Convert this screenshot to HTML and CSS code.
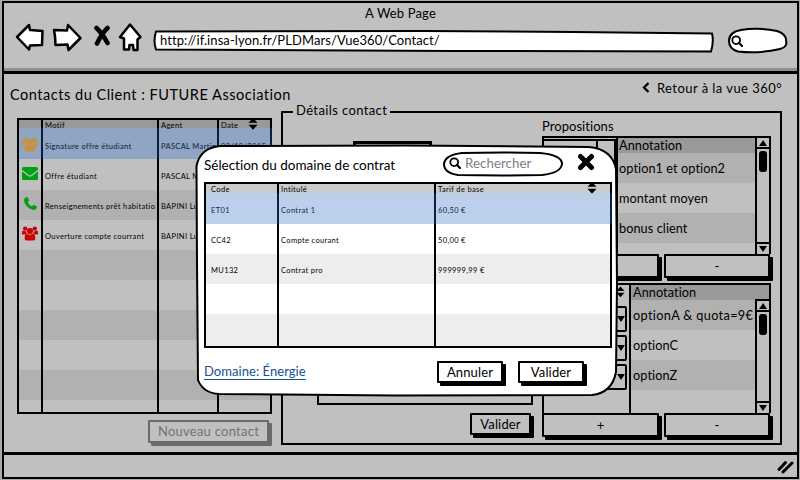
FILE: index.html
```html
<!DOCTYPE html>
<html lang="fr">
<head>
<meta charset="utf-8">
<title>A Web Page</title>
<link rel="stylesheet" href="styles.css">
</head>
<body>
<svg width="0" height="0" class="defs">
  <symbol id="users" viewBox="0 0 16 15">
    <circle cx="3.2" cy="2.6" r="2.2"/><circle cx="12.8" cy="2.6" r="2.2"/>
    <path d="M0 8.5V6q0-1.600 1.500-1.600L4 5.500 5 8.500zM16 8.500V6q0-1.600-1.500-1.600L12 5.500l-1 3z"/>
    <circle cx="8" cy="5" r="3.100"/>
    <path d="M2.600 12.500q0-4.600 2.700-4.800Q8 9.800 10.700 7.700q2.700.2 2.700 4.800 0 1.900-2 1.900H4.600q-2 0-2-1.900z"/>
  </symbol>
  <symbol id="sort" viewBox="0 0 10 12"><path d="M.5 4.800 5 0l4.500 4.800zM.5 6.800h9L5 11.800z"/></symbol>
  <symbol id="lens" viewBox="0 0 12 12"><circle cx="5.200" cy="5.200" r="3.900" fill="none" stroke="#000" stroke-width="1.800"/><path d="M7.800 7.800 11 11" stroke="#000" stroke-width="2.200" stroke-linecap="round"/></symbol>
  <symbol id="up" viewBox="0 0 8 6"><path d="M0 6 4.200 0 8 6z"/></symbol>
  <symbol id="down" viewBox="0 0 8 6"><path d="M0 0h8L4 6z"/></symbol>
</svg>
<div class="window">
  <header class="chrome">
    <div class="page-title">A Web Page</div>
    <div class="toolbar">
      <svg class="back" width="30" height="30" viewBox="0 0 30 30"><path d="m2 15 12-12 1 5 12.500 1-.5 14-12 .5-1 4z"/></svg>
      <svg class="forward" width="31" height="30" viewBox="0 0 31 30"><path d="m2 8 13 .5L16 3l12.500 13-12 12-1-5.500-12 .5q0-8-1.500-15z"/></svg>
      <svg class="stop" width="18" height="22" viewBox="0 0 18 22"><path d="M3.500 3Q9 8 14.500 18M14.500 3Q9 8 4 18.500"/></svg>
      <svg class="home" width="25" height="30" viewBox="0 0 25 30"><path d="m2 15 10-12.500L22.500 15l-3 2.500V28h-4l-.5-5h-3.500l-.5 4.500H6V16.500z"/></svg>
      <div class="address">
        <svg class="outline" width="562" height="26" viewBox="0 0 562 26"><path d="M3 3.500 270 3l150 1 139 1.500q2 8-1 18L300 23 3 21.500Q0 13 3 3.500z"/></svg>
        <span>http://if.insa-lyon.fr/PLDMars/Vue360/Contact/</span>
      </div>
      <div class="quick">
        <svg class="outline" width="62" height="28" viewBox="0 0 62 28"><path d="M2 14Q2 5 14 3 31 0 50 4q9 3 9 9 2 7-6 9-22 5-42 2.500Q2 22 2 14z"/></svg>
        <svg class="quick-lens" width="12" height="12"><use href="#lens"/></svg>
      </div>
    </div>
  </header>

  <main>
    <div class="page-head">
      <h1>Contacts du Client : FUTURE Association</h1>
      <a class="return"><svg width="8" height="11" viewBox="0 0 8 11"><path d="M6.500 1 2 5.500 6.500 10"/></svg><span>Retour à la vue 360°</span></a>
    </div>
    <div class="columns">
      <section class="contacts">
        <div class="grid small contact-grid">
          <div class="row head"><span></span><span>Motif</span><span>Agent</span><span>Date<svg class="sort" width="10" height="12"><use href="#sort"/></svg></span></div>
          <div class="row selected"><span><svg fill="#c8913c" width="16" height="15"><use href="#users"/></svg></span><span>Signature offre étudiant</span><span>PASCAL Martin</span><span>02/10/2015</span></div>
          <div class="row"><span><svg width="16" height="13" viewBox="0 0 16 13" class="mail"><rect width="16" height="13" rx="1.500" fill="#00a015"/><path d="m0 3.500 6.500 5q1.500 1 3 0l6.500-5" fill="none" stroke="#c0c0c0" stroke-width="1.300"/></svg></span><span>Offre étudiant</span><span>PASCAL Martin</span><span></span></div>
          <div class="row alt"><span><svg class="phone" width="13" height="13" viewBox="0 0 13 13"><path fill="#00a015" d="M1 .8 3.500 0 5.300 3.600 3.800 5.200Q5 8 7.900 9.200L9.500 7.700 13 9.500l-.8 2.500q-1.300 1.200-3.500.8Q1.500 10.500 0 4 0 1.600 1 .8z"/></svg></span><span>Renseignements prêt habitatio</span><span>BAPINI Luc</span><span></span></div>
          <div class="row"><span><svg fill="#cc0303" width="16" height="15"><use href="#users"/></svg></span><span>Ouverture compte courrant</span><span>BAPINI Luc</span><span></span></div>
          <div class="row alt"><span></span><span></span><span></span><span></span></div>
          <div class="row"><span></span><span></span><span></span><span></span></div>
          <div class="row alt"><span></span><span></span><span></span><span></span></div>
          <div class="row"><span></span><span></span><span></span><span></span></div>
          <div class="row alt"><span></span><span></span><span></span><span></span></div>
          <div class="row last"><span></span><span></span><span></span><span></span></div>
        </div>
        <button class="btn disabled">Nouveau contact</button>
      </section>

      <section class="details">
        <h2>Détails contact</h2>
        <div class="form">
          <div class="picker"></div>
          <div class="notes"></div>
          <button class="btn confirm">Valider</button>
        </div>
        <div class="offers">
          <h3>Propositions</h3>
          <div class="list first">
            <div class="side"><i></i><i></i></div>
            <div class="items">
              <div class="item title">Annotation</div>
              <div class="item alt">option1 et option2</div>
              <div class="item">montant moyen</div>
              <div class="item alt">bonus client</div>
            </div>
            <div class="scroll"><b><svg width="8" height="6"><use href="#up"/></svg></b><em></em><b><svg width="8" height="6"><use href="#down"/></svg></b></div>
          </div>
          <div class="pair"><button class="btn"></button><button class="btn">-</button></div>
          <div class="list second">
            <div class="side"><svg class="sort" width="9" height="12"><use href="#sort"/></svg><i><svg width="8" height="6"><use href="#down"/></svg></i><i><svg width="8" height="6"><use href="#down"/></svg></i><i><svg width="8" height="6"><use href="#down"/></svg></i></div>
            <div class="items">
              <div class="item title">Annotation</div>
              <div class="item alt quota">optionA &amp; quota=9€</div>
              <div class="item">optionC</div>
              <div class="item alt">optionZ</div>
            </div>
            <div class="scroll"><b><svg width="8" height="6"><use href="#up"/></svg></b><em></em><b><svg width="8" height="6"><use href="#down"/></svg></b></div>
          </div>
          <div class="pair"><button class="btn">+</button><button class="btn">-</button></div>
        </div>
      </section>
    </div>
  </main>
  <footer><svg width="17" height="14" viewBox="0 0 17 14"><path d="M2 9.500 8.500 2.500M6 12l9-9"/></svg></footer>
</div>

<div class="dialog">
  <svg class="dialog-frame" width="424" height="254" viewBox="0 0 424 254"><path d="M25 2 210 1.500 394 3Q417 5 421 25L422 140 421 228Q417 249 397 251L200 251.500 24 250Q8 249 3 236L2 120 1.500 22Q5 4 25 2z"/></svg>
  <div class="dialog-head">
    <h2>Sélection du domaine de contrat</h2>
    <div class="search">
      <svg class="outline" width="122" height="26" viewBox="0 0 122 26"><path d="M20 2 60 1.500 98 2Q120 4 120 13q-1 9-20 11L60 24.500 16 24Q2 22 2 13 3 4 20 2z"/></svg>
      <svg width="12" height="12"><use href="#lens"/></svg><span>Rechercher</span>
    </div>
    <svg class="close" width="18" height="18" viewBox="0 0 18 18"><path d="m3.500 3.500 11 11M14.500 3.500l-11 11"/></svg>
  </div>
  <div class="grid small contract-grid">
    <div class="row head"><span>Code</span><span>Intitulé</span><span>Tarif de base<svg class="sort" width="10" height="12"><use href="#sort"/></svg></span></div>
    <div class="row selected"><span>ET01</span><span>Contrat 1</span><span>60,50 €</span></div>
    <div class="row"><span>CC42</span><span>Compte courant</span><span>50,00 €</span></div>
    <div class="row alt"><span>MU132</span><span>Contrat pro</span><span>999999,99 €</span></div>
    <div class="row"><span></span><span></span><span></span></div>
    <div class="row alt"><span></span><span></span><span></span></div>
  </div>
  <div class="dialog-foot">
    <a>Domaine: Énergie</a>
    <button class="btn">Annuler</button>
    <button class="btn">Valider</button>
  </div>
</div>
</body>
</html>
```
FILE: styles.css
```css
* { box-sizing: border-box; }
body { margin: 0; width: 800px; height: 480px; overflow: hidden; position: relative; background: #aaa; font-family: Lato, "Liberation Sans", sans-serif; font-size: 13px; color: #000; }
h1, h2, h3 { margin: 0; font-weight: 400; white-space: nowrap; }
.defs { position: absolute; }
svg { flex: none; }

.window { margin: 1px 1px 1px 2px; width: 797px; height: 478px; border: 2px solid #000; background: #c0c0c0; display: flex; flex-direction: column; }

.chrome { height: 71px; flex: none; border-bottom: 3px solid #000; box-shadow: inset 0 -3px #8f8f8f; }
.page-title { height: 19px; padding-top: 2px; line-height: 16px; text-align: center; font-size: 13px; letter-spacing: .15px; }
.toolbar { display: flex; align-items: flex-start; padding-left: 11px; }
.toolbar > svg path { fill: #fff; stroke: #000; stroke-width: 2.5; stroke-linejoin: round; }
.toolbar > .stop path { fill: none; stroke-width: 4.6; stroke-linecap: round; }
.forward { margin-left: 7px; }
.stop { margin: 3px 0 0 10px; }
.home { margin-left: 7px; }
.outline { position: absolute; left: 0; top: 0; }
.outline path { fill: #fff; stroke: #000; stroke-width: 2; }
.address { position: relative; width: 562px; height: 26px; margin: 6px 0 0 10px; padding-left: 7px; line-height: 24px; }
.address span { position: relative; font-size: 13px; letter-spacing: .08px; }
.quick { position: relative; width: 62px; height: 28px; margin: 5px 0 0 12px; padding: 8px; }
.quick-lens { position: relative; width: 12px; height: 12px; display: block; margin-left: -4px; }

main { flex: 1; min-height: 0; }
.page-head { height: 30px; display: flex; justify-content: space-between; padding: 0 15px 0 6px; }
h1 { font-size: 14.6px; line-height: 41px; letter-spacing: .48px; }
.return { display: flex; align-items: center; height: 27px; gap: 7px; font-size: 13px; letter-spacing: .45px; }
.return path { fill: none; stroke: #000; stroke-width: 2.3; }
.columns { display: flex; gap: 9px; padding-left: 13px; }
.contacts { width: 255px; padding-top: 14px; }

.grid { border: 2px solid #000; position: relative; }
.small { font-size: 7.5px; letter-spacing: .35px; }
.row { display: grid; height: 30px; }
.row span { border-right: 2px solid #000; padding: 1px 0 0 3px; display: flex; align-items: center; overflow: hidden; white-space: nowrap; }
.row span:last-child { border-right: 0; }
.row.head span { padding-top: 0; overflow: visible; }
.row.selected { height: 31px; margin-right: -2px; }
.row.selected span { border-color: #08213f; }
.row.selected span:last-child { border-right: 2px solid #08213f; }

.contact-grid { height: 296px; }
.contact-grid .row { grid-template-columns: 24px 116px 60px 1fr; }
.contact-grid .row.alt { background: #b1b1b1; }
.contact-grid .row.head { height: 8px; background: #999; }
.contact-grid .row.head span { line-height: 10px; height: 8px; padding-top: 3px; }
.contact-grid .row.head .sort { margin: -3px 12px 0 auto; }
.contact-grid .row.selected { background: #90a4c3; color: #0c1c33; }
.contact-grid .row.selected + .row { height: 31px; }
.contact-grid .row.last { height: 13px; }
.contact-grid .row span { padding-left: 2px; }
.contact-grid .row span:first-child { padding: 0 0 0 3px; }
.contact-grid .row:not(.head) svg { margin-top: -3px; }
.contact-grid .row.selected svg { margin-top: 1px; }
.contact-grid .row .phone { margin-left: 2px; }
.contact-grid .row:not(.head) span:not(:first-child) { padding-top: 3px; }
.contact-grid .row.selected span:not(:first-child) { padding-top: 6px; }

.btn { display: block; margin: 0; padding: 0; border: 2px solid #000; border-radius: 1px; background: #c0c0c0; box-shadow: 3px 3px #000; font: inherit; font-size: 13px; letter-spacing: .15px; color: #000; width: 61px; height: 22px; line-height: 17px; text-align: center; white-space: nowrap; }
.disabled { width: 121px; height: 23px; margin: 6px 0 0 131px; border-color: #6b6b6b; box-shadow: 3px 3px #6b6b6b; color: #737373; letter-spacing: .25px; }

.details { position: relative; width: 501px; height: 334px; margin-top: 7px; border: 2px solid #000; display: flex; }
.details > h2 { position: absolute; left: 10px; top: -11px; padding: 0 3px; line-height: 16px; background: #c0c0c0; font-size: 13px; letter-spacing: .38px; }
.form { width: 259px; padding-top: 28px; }
.picker { width: 79px; height: 24px; margin-left: 70px; border: 3px solid #000; }
.notes { width: 216px; height: 231px; margin: 9px 0 0 34px; border: 2px solid #000; }
.form .confirm { margin: 8px 0 0 187px; }
.offers { width: 229px; padding-top: 5px; }
h3 { font-size: 13px; line-height: 16px; height: 17px; letter-spacing: .05px; }
.list { display: flex; border: 2px solid #000; border-bottom: 0; width: 229px; }
.first { height: 118px; margin-top: 1px; }
.second { height: 130px; margin-top: 4px; }
.side { display: flex; border-right: 2px solid #000; }
.first .side { width: 74px; padding-top: 1px; }
.first .side i { width: 54px; height: 60px; border: 2px solid #000; border-left: 0; }
.first .side i:last-child { width: 18px; }
.second .side { width: 87px; flex-direction: column; align-items: flex-end; }
.second .side .sort { margin: 1px 4px 8px 0; }
.second .side i { width: 54px; height: 26px; margin: 0 2px 3px 0; border: 2px solid #000; border-radius: 2px; display: flex; align-items: center; justify-content: flex-end; }
.items { flex: 1; min-width: 0; font-size: 12.7px; letter-spacing: .08px; white-space: nowrap; }
.item { height: 30px; line-height: 31px; padding-left: 1px; }
.second .item { padding-left: 2px; }
.item.alt { background: #b1b1b1; }
.item.title { height: 15px; line-height: 15px; background: #999; }
.second .quota { letter-spacing: .35px; }
.second .title { margin-right: -14px; }
.scroll { width: 14px; border-left: 2px solid #000; background: #c0c0c0; display: flex; flex-direction: column; }
.second .scroll { margin-top: 14px; border-top: 2px solid #000; }
.scroll b { height: 11px; border-bottom: 2px solid #000; display: flex; justify-content: center; align-items: center; }
.scroll b:last-child { margin-top: auto; border-top: 2px solid #000; border-bottom: 0; height: 12px; }
.scroll em { width: 8px; height: 21px; margin: 2px 2px 0; border-radius: 3px; background: #000; }
.pair { display: flex; gap: 5px; height: 25px; }
.pair .btn { width: 117px; height: 24px; line-height: 19px; }
.pair .btn:last-child { width: 106px; }

footer { height: 25px; flex: none; border-top: 3px solid #000; display: flex; justify-content: flex-end; padding: 5px 3px 0 0; }
footer path { fill: none; stroke: #000; stroke-width: 3; stroke-linecap: round; }

.dialog { position: absolute; left: 195px; top: 144px; width: 424px; height: 254px; }
.dialog-frame { position: absolute; left: 0; top: 0; }
.dialog-frame path { fill: #fff; stroke: #000; stroke-width: 2; }
.dialog-head { position: relative; display: flex; align-items: flex-start; height: 38px; padding: 7px 0 0 9px; }
.dialog-head h2 { width: 238px; font-size: 13.5px; line-height: 28px; letter-spacing: -.01px; }
.search { position: relative; width: 122px; height: 26px; display: flex; align-items: center; gap: 4px; padding: 0 0 2px 7px; color: #7d7d88; font-size: 13.3px; letter-spacing: .05px; }
.search > :not(.outline) { position: relative; }
.close { margin: 2px 0 0 13px; }
.close path { stroke: #000; stroke-width: 5; stroke-linecap: round; }
.contract-grid { width: 408px; height: 166px; margin-left: 9px; background: #fff; }
.contract-grid .row { grid-template-columns: 73px 157px 1fr; }
.contract-grid .row span { padding-left: 2px; }
.contract-grid .row span:first-child { padding-left: 5px; }
.contract-grid .row.head { height: 9px; background: #cbcbcb; }
.contract-grid .row.head .sort { margin: -2px 13px 0 auto; }
.contract-grid .row.head span { height: 9px; line-height: 9px; padding-top: 1px; }
.contract-grid .row.selected { background: #bccfeb; color: #13294a; }
.contract-grid .row.alt { background: #ededed; }
.contract-grid .row:not(.head) span { padding-top: 3px; }
.contract-grid .row:last-child { height: 32px; }
.dialog-foot { position: relative; display: flex; padding: 13px 0 0 9px; }
.dialog-foot a { width: 233px; line-height: 21px; color: #174f94; text-decoration: underline; text-underline-offset: 3px; font-size: 13px; letter-spacing: .05px; }
.dialog-foot .btn { background: #fff; width: 66px; height: 22px; }
.dialog-foot .btn + .btn { margin-left: 15px; }
```
